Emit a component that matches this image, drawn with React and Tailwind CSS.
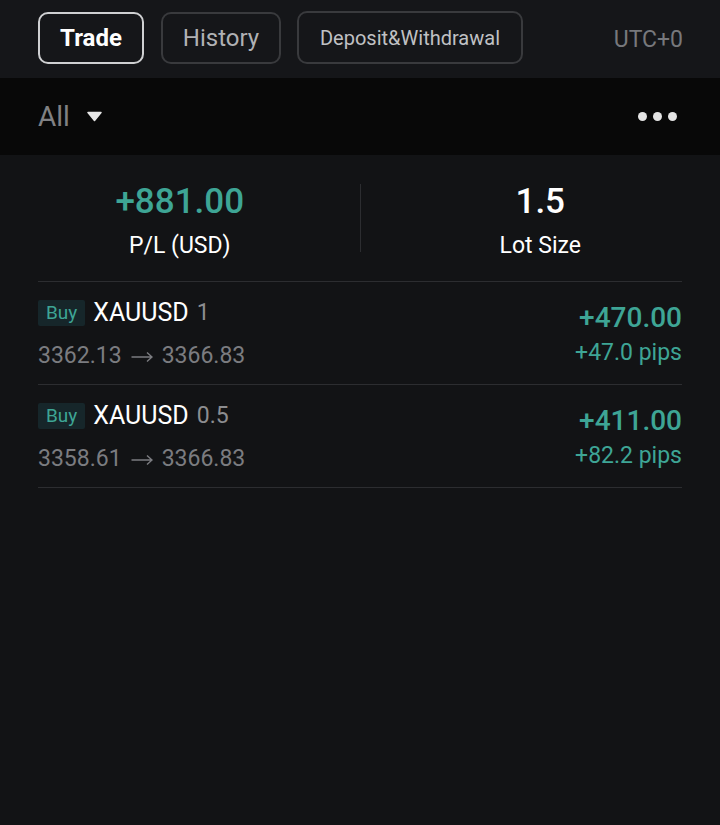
import React from "react";

const positions = [
  { side: "Buy", symbol: "XAUUSD", lots: "1", open: "3362.13", close: "3366.83", pl: "+470.00", pips: "+47.0 pips" },
  { side: "Buy", symbol: "XAUUSD", lots: "0.5", open: "3358.61", close: "3366.83", pl: "+411.00", pips: "+82.2 pips" },
];

function Arrow() {
  return (
    <svg className="mx-[9px] mt-[1px]" width="22" height="12" viewBox="0 0 22 12" fill="none">
      <path d="M0.5 6 H21 M16 1.5 L21 6 L16 10.5" stroke="#7b7c80" strokeWidth="1.4" />
    </svg>
  );
}

function PositionRow({ p }) {
  return (
    <div className="flex items-start justify-between border-b border-[#2c2d30] pt-[15px] pb-[13px]">
      <div className="flex flex-col">
        <div className="flex items-center h-[32px]">
          <span className="bg-[#16262a] text-[#3ea595] text-[19px] leading-[26px] px-[8px] rounded-[2px]">
            {p.side}
          </span>
          <span className="ml-[8px] text-white text-[25px]">{p.symbol}</span>
          <span className="ml-[8px] text-[#8c8d90] text-[23px]">{p.lots}</span>
        </div>
        <div className="mt-[12px] flex items-center text-[#7b7c80] text-[23px] leading-[30px]">
          <span>{p.open}</span>
          <Arrow />
          <span>{p.close}</span>
        </div>
      </div>
      <div className="flex flex-col items-end pt-[4px]">
        <span className="text-[#3ea595] text-[28px] font-medium leading-[34px]">{p.pl}</span>
        <span className="mt-[4px] text-[#3ea595] text-[23px] leading-[28px]">{p.pips}</span>
      </div>
    </div>
  );
}

export default function App() {
  return (
    <div className="min-h-[825px] w-[720px] bg-[#121315] font-['Roboto',sans-serif]">
      {/* tabs */}
      <div className="h-[78px] bg-[#151619] flex items-center px-[38px] pb-[3px]">
        <button className="h-[52px] w-[106px] rounded-[10px] border-2 border-[#cfd0d2] text-white text-[24px] font-bold">
          Trade
        </button>
        <button className="ml-[17px] h-[52px] w-[120px] rounded-[10px] border-2 border-[#393a3d] text-[#b0b1b4] text-[24px]">
          History
        </button>
        <button className="ml-[16px] h-[53px] w-[226px] rounded-[10px] border-2 border-[#393a3d] text-[#c0c1c4] text-[20px]">
          Deposit&amp;Withdrawal
        </button>
        <span className="ml-auto mt-[5px] text-[#77787c] text-[23px] mr-[-1px]">UTC+0</span>
      </div>

      {/* filter */}
      <div className="h-[77px] bg-[#080808] flex items-center px-[38px]">
        <span className="text-[#808184] text-[28px]">All</span>
        <svg className="ml-[17px]" width="15" height="11" viewBox="0 0 15 11">
          <path d="M1 1.5 L14 1.5 L7.5 9.5 Z" fill="#e6e6e6" stroke="#e6e6e6" strokeWidth="1.5" strokeLinejoin="round" />
        </svg>
        <div className="ml-auto flex gap-[6px] mr-[5px]">
          <span className="w-[9px] h-[9px] rounded-full bg-[#e4e4e4]" />
          <span className="w-[9px] h-[9px] rounded-full bg-[#e4e4e4]" />
          <span className="w-[9px] h-[9px] rounded-full bg-[#e4e4e4]" />
        </div>
      </div>

      {/* summary */}
      <div className="flex items-start pt-[27px] pb-[20px]">
        <div className="flex-1 flex flex-col items-center">
          <span className="text-[#3ea595] text-[35px] font-medium leading-[40px]">+881.00</span>
          <span className="mt-[9px] text-white text-[23px] leading-[30px]">P/L (USD)</span>
        </div>
        <div className="w-px h-[68px] mt-[2px] bg-[#2c2d30]" />
        <div className="flex-1 flex flex-col items-center">
          <span className="text-white text-[35px] font-medium leading-[40px]">1.5</span>
          <span className="mt-[9px] text-white text-[23px] leading-[30px]">Lot Size</span>
        </div>
      </div>

      <div className="px-[38px]">
        <div className="border-t border-[#2c2d30]" />
        {positions.map((p, i) => (
          <PositionRow key={i} p={p} />
        ))}
      </div>
    </div>
  );
}
